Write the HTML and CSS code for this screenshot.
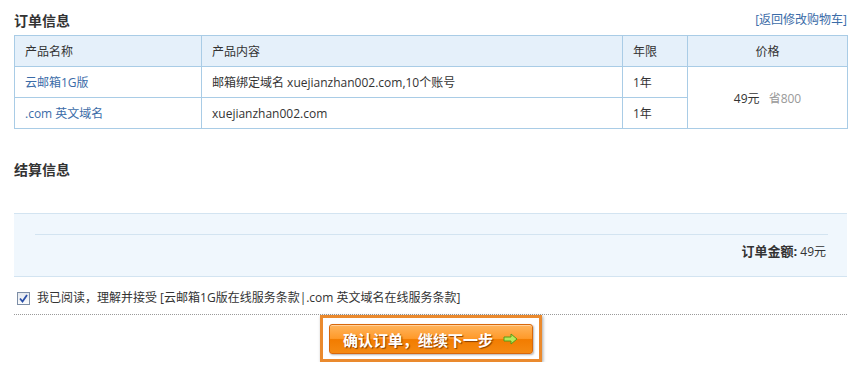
FILE: index.html
```html
<!DOCTYPE html>
<html lang="zh-CN">
<head>
  <meta charset="UTF-8">
  <title>订单确认</title>
  <link rel="stylesheet" href="styles.css">
</head>
<body>
  <div class="order-page">
    <div class="block-head">
      <h2 class="block-title">订单信息</h2>
      <a href="#" class="back-link">[返回修改购物车]</a>
    </div>

    <table class="order-table">
      <colgroup>
        <col class="col-name">
        <col class="col-content">
        <col class="col-year">
        <col class="col-price">
      </colgroup>
      <thead>
        <tr>
          <th>产品名称</th>
          <th>产品内容</th>
          <th>年限</th>
          <th class="center">价格</th>
        </tr>
      </thead>
      <tbody>
        <tr>
          <td><a href="#" class="product-link">云邮箱1G版</a></td>
          <td>邮箱绑定域名 xuejianzhan002.com,10个账号</td>
          <td>1年</td>
          <td class="center" rowspan="2">
            <span class="price">49元</span>
            <span class="saved">省800</span>
          </td>
        </tr>
        <tr>
          <td><a href="#" class="product-link">.com 英文域名</a></td>
          <td>xuejianzhan002.com</td>
          <td>1年</td>
        </tr>
      </tbody>
    </table>

    <h2 class="block-title settle-title">结算信息</h2>

    <div class="settle-box">
      <div class="settle-total">
        <strong>订单金额:</strong> 49元
      </div>
    </div>

    <div class="agree-row">
      <span class="check-box">
        <svg width="9" height="9" viewBox="0 0 9 9"><path d="M1 4.5 L3.5 7.5 L8 1" fill="none" stroke="#2a4fa8" stroke-width="1.8"/></svg>
      </span>
      <span>我已阅读，理解并接受 [云邮箱1G版在线服务条款|.com 英文域名在线服务条款]</span>
    </div>

    <div class="submit-row">
      <div class="submit-frame">
        <button class="submit-button">
          确认订单，继续下一步
          <svg class="arrow" width="15" height="12" viewBox="0 0 15 12"><path d="M1 4h7V1l6 5-6 5V8H1z" fill="#b5e85a" stroke="#5a9a18" stroke-width="1"/></svg>
        </button>
      </div>
    </div>
  </div>
</body>
</html>
```

FILE: styles.css
```css
* {
  margin: 0;
  padding: 0;
  box-sizing: border-box;
}

body {
  background: #fff;
  color: #333;
  font-family: "Open Sans", "Noto Sans CJK SC", sans-serif;
  font-size: 12px;
}

a {
  text-decoration: none;
}

.order-page {
  padding: 0 10px 0 14px;
}

.block-head {
  display: flex;
  justify-content: space-between;
  align-items: center;
  height: 35px;
  padding-top: 6px;
}

.block-title {
  font-size: 14px;
  font-weight: bold;
  line-height: 24px;
  color: #333;
}

.back-link {
  color: #3b6ca8;
  margin-top: -4px;
}

.order-table {
  width: 100%;
  table-layout: fixed;
  border-collapse: collapse;
  border: 1px solid #a9cce6;
}

.col-name { width: 187px; }
.col-content { width: 421px; }
.col-year { width: 65px; }
.col-price { width: 160px; }

.order-table th,
.order-table td {
  height: 31px;
  padding: 0 10px;
  border: 1px solid #a9cce6;
  text-align: left;
  font-weight: normal;
  white-space: nowrap;
}

.order-table th {
  background: #e5f0fa;
}

.order-table .center {
  text-align: center;
}

.product-link {
  color: #3b6ca8;
}

.price {
  color: #333;
}

.saved {
  color: #999;
  margin-left: 6px;
}

.settle-title {
  margin-top: 29px;
}

.settle-box {
  margin-top: 31px;
  background: #f0f7fd;
  border-top: 1px solid #d3e4f1;
  border-bottom: 1px solid #d3e4f1;
  padding: 20px 19px 14px 21px;
}

.settle-total {
  border-top: 1px solid #d3e4f1;
  padding: 6px 2px 0 0;
  line-height: 20px;
  text-align: right;
  color: #333;
}

.settle-total strong {
  font-size: 13px;
}

.agree-row {
  display: flex;
  align-items: center;
  gap: 7px;
  padding: 10px 0 5px 3px;
  line-height: 22px;
  border-bottom: 1px dotted #9a9a9a;
}

.check-box {
  width: 13px;
  height: 13px;
  border: 1px solid #7d8ea6;
  background: linear-gradient(#e4e8ee, #fbfcfd);
  display: flex;
  align-items: center;
  justify-content: center;
}

.submit-row {
  display: flex;
  justify-content: center;
}

.submit-frame {
  border: 3px solid #ea8a2e;
  padding: 6px 6px 5px;
  background: #fff;
  box-shadow: 1px 1px 3px rgba(0, 0, 0, 0.35);
}

.submit-button {
  width: 204px;
  height: 30px;
  display: flex;
  align-items: center;
  justify-content: center;
  gap: 8px;
  border: 1px solid #d9680a;
  border-radius: 3px;
  background: linear-gradient(#ffb45c 0%, #ff9a2a 48%, #f27c00 52%, #f58a12 100%);
  box-shadow: inset 0 1px 0 rgba(255, 255, 255, 0.4), 1px 1px 2px rgba(0, 0, 0, 0.3);
  color: #fff;
  font-family: "Noto Sans CJK SC", sans-serif;
  font-size: 15px;
  font-weight: bold;
  text-shadow: 1px 1px 1px #8a4000;
  cursor: pointer;
}

.arrow {
  margin-left: 2px;
}
```
